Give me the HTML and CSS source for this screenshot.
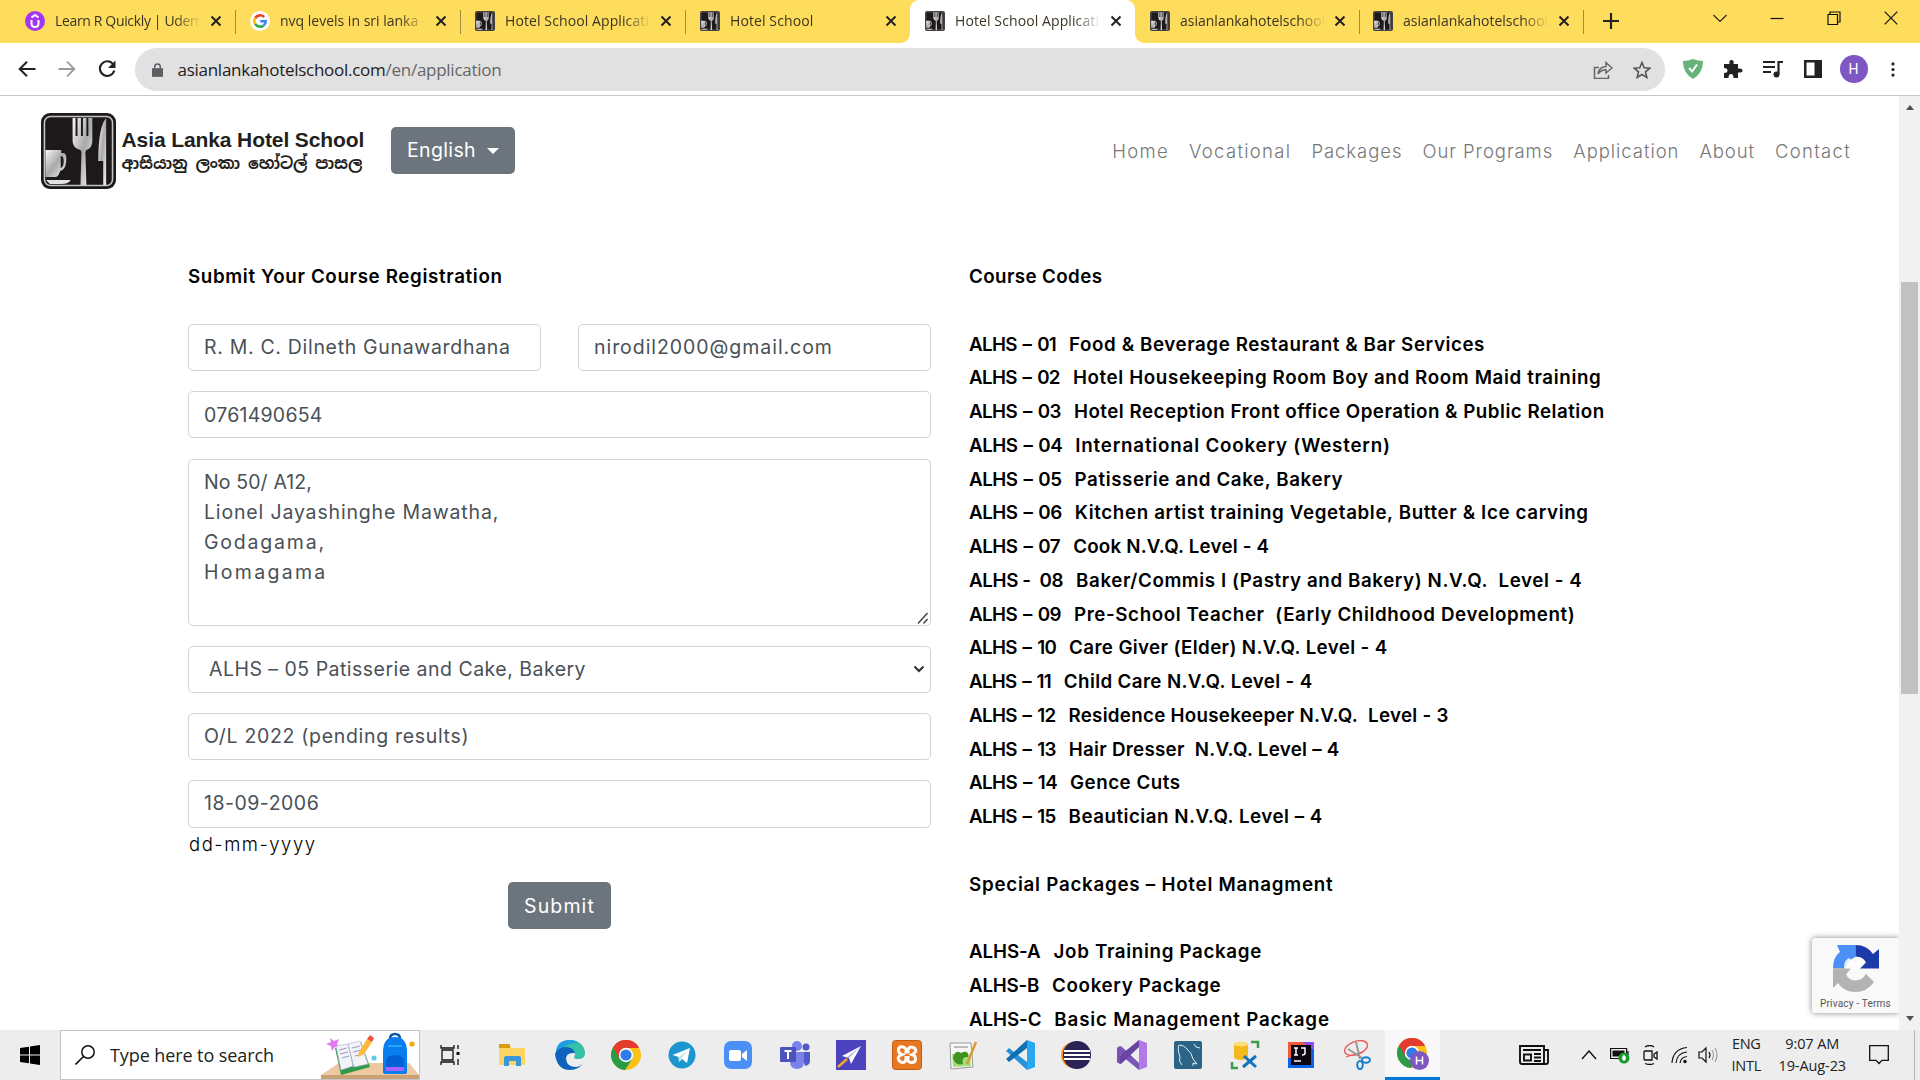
FILE: index.html
```html
<!DOCTYPE html>
<html lang="en">
<head>
<meta charset="utf-8">
<title>Hotel School Application</title>
<link rel="stylesheet" href="styles.css">
</head>
<body>
<svg class="defs" width="0" height="0">
  <defs>
    <linearGradient id="steel" x1="0" y1="0" x2="1" y2="1"><stop offset="0" stop-color="#f8f8f8"/><stop offset=".5" stop-color="#a9a9a9"/><stop offset="1" stop-color="#f4f4f4"/></linearGradient>
    <symbol id="cutlery" viewBox="0 0 76 76" preserveAspectRatio="none">
      <rect width="76" height="76" rx="9" fill="#1d191b"/>
      <rect x="3.5" y="3.500" width="69" height="69" rx="6" fill="none" stroke="#c4c4c4" stroke-width="1.600"/>
      <path d="M32 5h3v18h2V5h3.500v18h2V5H46v18h2V5h4v23q0 7-6 9l-1 2 1 33h-6l1-33-1-2q-8-2-8-9z" fill="url(#steel)"/>
      <path d="M66 5v67h-3V48h-5q0-34 8-43z" fill="url(#steel)"/>
      <path d="M4.500 37h16v3h2q4 0 3 9-1 8-6 9-1 4-4 6h-11zM20 43v12q3-1 3-7 0-5-3-5z" fill="url(#steel)" fill-rule="evenodd"/>
      <path d="M5 67h25q-2 4-9 4H9z" fill="#e2e2e2"/>
    </symbol>
    <symbol id="cross" viewBox="0 0 12 12"><path d="M1.500 1.500l9 9M10.500 1.500l-9 9" stroke="#222" stroke-width="2" fill="none"/></symbol>
    <symbol id="chrome" viewBox="0 0 30 30">
      <circle cx="15" cy="15" r="15" fill="#fbc116"/>
      <path d="M15 15L2 7.500A15 15 0 0 1 28 7.500H15z" fill="#e33b2e"/>
      <path d="M2 7.500A15 15 0 0 0 14 30l7.500-11.500L15 15z" fill="#2a9b47"/>
      <path d="M2 7.500L8.500 18.500 15 8H28A15 15 0 0 0 2 7.500z" fill="#e33b2e"/>
      <circle cx="15" cy="15" r="7.200" fill="#fff"/><circle cx="15" cy="15" r="5.600" fill="#2f7be8"/>
    </symbol>
  </defs>
</svg>

<div class="tabstrip">
  <div class="tab tab-first">
    <svg class="favicon" viewBox="0 0 20 20"><circle cx="10" cy="10" r="10" fill="#a435f0"/><path d="M6.500 9v3.500q0 3.500 3.500 3.500t3.500-3.500V9M6.500 6.500L10 4l3.500 2.500" fill="none" stroke="#fff" stroke-width="2"/></svg>
    <span class="tab-title">Learn R Quickly | Udemy</span><svg class="close"><use href="#cross"/></svg>
  </div>
  <div class="tab">
    <svg class="favicon" viewBox="0 0 20 20"><circle cx="10" cy="10" r="10" fill="#fff"/><g fill="none" stroke-width="2.600"><path d="M14.200 6A5.800 5.800 0 0 0 5.200 7" stroke="#ea4335"/><path d="M5.200 7a5.800 5.800 0 0 0 0 6" stroke="#fbbc05"/><path d="M5.200 13a5.800 5.800 0 0 0 8.500 1.400" stroke="#34a853"/><path d="M13.700 14.400q2-1.800 2-4.200H10.200" stroke="#4285f4"/></g></svg>
    <span class="tab-title">nvq levels in sri lanka - Google</span><svg class="close"><use href="#cross"/></svg>
  </div>
  <div class="tab">
    <svg class="favicon"><use href="#cutlery"/></svg>
    <span class="tab-title tab-wide">Hotel School Application</span><svg class="close"><use href="#cross"/></svg>
  </div>
  <div class="tab tab-plain">
    <svg class="favicon"><use href="#cutlery"/></svg>
    <span class="tab-title tab-wide">Hotel School</span><svg class="close"><use href="#cross"/></svg>
  </div>
  <div class="tab tab-active">
    <svg class="favicon"><use href="#cutlery"/></svg>
    <span class="tab-title tab-wide">Hotel School Application</span><svg class="close"><use href="#cross"/></svg>
  </div>
  <div class="tab tab-narrow">
    <svg class="favicon"><use href="#cutlery"/></svg>
    <span class="tab-title">asianlankahotelschool.com</span><svg class="close"><use href="#cross"/></svg>
  </div>
  <div class="tab tab-narrow">
    <svg class="favicon"><use href="#cutlery"/></svg>
    <span class="tab-title">asianlankahotelschool.com</span><svg class="close"><use href="#cross"/></svg>
  </div>
  <svg class="new-tab" viewBox="0 0 16 16"><path d="M8 0v16M0 8h16" stroke="#222" stroke-width="2.200"/></svg>
  <div class="window-controls">
    <svg viewBox="0 0 14 14"><path d="M.5 4L7 10.500 13.500 4" fill="none" stroke="#222" stroke-width="1.100"/></svg>
    <svg viewBox="0 0 14 14"><path d="M.5 7.500h13" stroke="#111" stroke-width="1.200"/></svg>
    <svg viewBox="0 0 14 14"><path d="M1 3.500h9.500V13.500H1zM3 3.500V1h10v10h-2.500" fill="none" stroke="#111" stroke-width="1.200"/></svg>
    <svg viewBox="0 0 14 14"><path d="M.7.700l12.600 12.600M13.300.700L.7 13.300" stroke="#111" stroke-width="1.200"/></svg>
  </div>
</div>

<div class="toolbar">
  <svg class="nav-icon" viewBox="0 0 18 18"><path d="M17.500 9H2M9 1.700L1.700 9 9 16.300" fill="none" stroke="#222" stroke-width="2"/></svg>
  <svg class="nav-icon" viewBox="0 0 18 18"><path d="M.5 9H16M9 1.700L16.300 9 9 16.300" fill="none" stroke="#9a9a9a" stroke-width="1.800"/></svg>
  <svg class="nav-icon" viewBox="0 0 18 18"><path d="M15.300 4.500A7.300 7.300 0 1 0 16.300 10.500" fill="none" stroke="#222" stroke-width="2.100"/><path d="M17.500.500v7.500H10z" fill="#222"/></svg>
  <div class="omnibox">
    <svg class="lock" viewBox="0 0 12 15"><path d="M0 5.500h12V15H0z" fill="#5b5e63"/><path d="M3 6V4a3 3 0 0 1 6 0v2" fill="none" stroke="#5b5e63" stroke-width="1.600"/></svg>
    <span class="url">asianlankahotelschool.com<span class="url-path">/en/application</span></span>
    <svg class="share" viewBox="0 0 20 18"><path d="M6 6.500H1.500v11h14V14" fill="none" stroke="#666" stroke-width="1.500"/><path d="M5 13q1-7 8-7.500V1.500l6 5.500-6 5V8.800Q8 8.800 5 13z" fill="none" stroke="#666" stroke-width="1.400"/></svg>
    <svg class="star" viewBox="0 0 18 18"><path d="M9 1.500l2.200 5.200 5.600.500-4.300 3.700 1.300 5.500L9 13.500l-4.800 2.900 1.300-5.500L1.200 7.200l5.600-.500z" fill="none" stroke="#555" stroke-width="1.600"/></svg>
  </div>
  <div class="extensions">
    <svg viewBox="0 0 20 20"><path d="M10 0q5 2 10 2 .3 12-10 18Q-.3 14 0 2q5 0 10-2z" fill="#67b279"/><path d="M6 9l3.200 3.500L14 5.500" fill="none" stroke="#fff" stroke-width="2"/></svg>
    <svg viewBox="0 0 20 20"><path d="M1 5h5.500q-.8-4 2-4t2 4H15v4.500q4.500-.6 4.500 2t-4.500 2V19h-4.500q0-4-2.500-4t-2.500 4H1v-5q3.500 0 3.500-2.500T1 9z" fill="#222"/></svg>
    <svg viewBox="0 0 20 20"><path d="M0 3h12M0 8h12M0 13h8M15.500 15V3H20" fill="none" stroke="#222" stroke-width="2.200"/><circle cx="13.500" cy="15.500" r="3" fill="#222"/></svg>
    <svg viewBox="0 0 20 20"><path d="M1 1h18v18H1zM3.500 3.500v13h8v-13z" fill="#222" fill-rule="evenodd"/></svg>
    <span class="avatar">H</span>
    <svg class="menu-dots" viewBox="0 0 20 20"><g fill="#222"><circle cx="10" cy="3" r="2"/><circle cx="10" cy="10" r="2"/><circle cx="10" cy="17" r="2"/></g></svg>
  </div>
</div>

<div class="viewport">
  <div class="page">
    <header class="site-header">
      <div class="brand">
        <svg class="brand-mark"><use href="#cutlery"/></svg>
        <div class="brand-text">
          <span class="brand-en">Asia Lanka Hotel School</span>
          <span class="brand-si" lang="si">ආසියානු ලංකා හෝටල් පාසල</span>
        </div>
      </div>
      <button class="btn language">English<i class="caret"></i></button>
      <nav class="site-nav">
        <a>Home</a><a>Vocational</a><a>Packages</a><a>Our Programs</a><a>Application</a><a>About</a><a>Contact</a>
      </nav>
    </header>
    <main class="content">
      <section class="registration">
        <h2 class="heading">Submit Your Course Registration</h2>
        <div class="form">
          <div class="form-row">
            <div class="field field-name">R. M. C. Dilneth Gunawardhana</div>
            <div class="field field-email">nirodil2000@gmail.com</div>
          </div>
          <div class="field field-phone">0761490654</div>
          <div class="field field-area">
            <span>No 50/ A12,</span>
            <span>Lionel Jayashinghe Mawatha,</span>
            <span>Godagama,</span>
            <span>Homagama</span>
            <svg class="resizer" viewBox="0 0 12 12"><path d="M1 11.500L10.500 1M6.500 11.500l4-4.500" stroke="#444" stroke-width="1.500"/></svg>
          </div>
          <div class="field field-select">ALHS – 05 Patisserie and Cake, Bakery
            <svg class="chevron" viewBox="0 0 12 8"><path d="M1.500 1.500L6 6l4.500-4.500" fill="none" stroke="#333" stroke-width="2.200"/></svg>
          </div>
          <div class="field">O/L 2022 (pending results)</div>
          <div class="field field-date">18-09-2006</div>
        </div>
        <p class="hint">dd-mm-yyyy</p>
        <button class="btn submit">Submit</button>
      </section>
      <section class="courses">
        <h2 class="heading heading-codes">Course Codes</h2>
        <ul class="course-list codes">
          <li><b>ALHS – 01</b><span>Food &amp; Beverage Restaurant &amp; Bar Services</span></li>
          <li><b>ALHS – 02</b><span>Hotel Housekeeping Room Boy and Room Maid training</span></li>
          <li><b>ALHS – 03</b><span>Hotel Reception Front office Operation &amp; Public Relation</span></li>
          <li><b>ALHS – 04</b><span>International Cookery (Western)</span></li>
          <li><b>ALHS – 05</b><span>Patisserie and Cake, Bakery</span></li>
          <li><b>ALHS – 06</b><span>Kitchen artist training Vegetable, Butter &amp; Ice carving</span></li>
          <li><b>ALHS – 07</b><span>Cook N.V.Q. Level - 4</span></li>
          <li><b>ALHS -&nbsp; 08</b><span>Baker/Commis I (Pastry and Bakery) N.V.Q.&nbsp; Level - 4</span></li>
          <li><b>ALHS – 09</b><span>Pre-School Teacher&nbsp; (Early Childhood Development)</span></li>
          <li><b>ALHS – 10</b><span>Care Giver (Elder) N.V.Q. Level - 4</span></li>
          <li><b>ALHS – 11</b><span>Child Care N.V.Q. Level - 4</span></li>
          <li><b>ALHS – 12</b><span>Residence Housekeeper N.V.Q.&nbsp; Level - 3</span></li>
          <li><b>ALHS – 13</b><span>Hair Dresser&nbsp; N.V.Q. Level – 4</span></li>
          <li><b>ALHS – 14</b><span>Gence Cuts</span></li>
          <li><b>ALHS – 15</b><span>Beautician N.V.Q. Level – 4</span></li>
        </ul>
        <h2 class="heading heading-packages">Special Packages – Hotel Managment</h2>
        <ul class="course-list packages">
          <li><b>ALHS-A</b><span>Job Training Package</span></li>
          <li><b>ALHS-B</b><span>Cookery Package</span></li>
          <li><b>ALHS-C</b><span>Basic Management Package</span></li>
        </ul>
      </section>
    </main>
    <aside class="recaptcha">
      <svg viewBox="0 0 46 47"><path d="M22.500 0v12Q16 14 12 23.500H0Q0 12 7 7L4 0z" fill="#4a90f5"/><path d="M22.500 0Q34 0 40 9l6-5v19.500H27l6-6q-3-6-10.500-6z" fill="#1c3aa9"/><path d="M0 23.500h18l-5 6q3 6 9.500 6T33 29l8 8q-7 10-18.500 10Q11 47 5 38l-5 5z" fill="#b3b3b3"/><path d="M11 23q0-8 5-10l7 6 3-7q7 3 6 6l-6 6z" fill="#fff" opacity=".85"/></svg>
      <span>Privacy - Terms</span>
    </aside>
  </div>
  <div class="scrollbar"><i class="up"></i><i class="thumb"></i><i class="down"></i></div>
</div>

<footer class="taskbar">
  <svg class="start" viewBox="0 0 20 20"><path d="M0 3l9-1.300v7.800H0zM10 1.500L20 0v9.500H10zM0 10.500h9v7.800L0 17zM10 10.500h10V20l-10-1.500z" fill="#000"/></svg>
  <div class="search">
    <svg class="magnifier" viewBox="0 0 20 20"><circle cx="13" cy="7" r="6.200" fill="none" stroke="#111" stroke-width="1.500"/><path d="M8.500 11.500L.500 19.500" stroke="#111" stroke-width="1.600"/></svg>
    <span>Type here to search</span>
    <svg class="doodle" viewBox="0 0 98 48"><path d="M18 32h70l10 12H0z" fill="#ecc9a0"/><path d="M0 44h98v4H0z" fill="#c9a177"/><path d="M9 7l4 3 5-2-2 5 3 4-5-1-3 4-1-5-5-2 5-2z" fill="#e478f5"/><path d="M14 17l26-6 9 25-29 8z" fill="#2f9a4a"/><path d="M15 15l12-2 5 22-12 4zM27 13l12-3 8 23-14 3z" fill="#f3f3fa" stroke="#b7b7d8" stroke-width=".7"/><path d="M18 19l8-2M19 23l8-2M21 27l7-2M31 17l8-2M32 21l8-2M34 25l8-2" stroke="#9898c0" stroke-width="1"/><path d="M38 21l8-13 5 3-8 12-6 3z" fill="#ffb83a"/><path d="M46 8l3-4 4 3-2 4z" fill="#f0533c"/><circle cx="53" cy="27" r="2.600" fill="#5ecbe0"/><circle cx="91" cy="13" r="2.600" fill="#f7a900"/><path d="M69 8q0-5 5-5t5 5" fill="none" stroke="#1257a8" stroke-width="2.500"/><path d="M62 21q0-15 12-15t12 15v20q0 2-3 2H65q-3 0-3-2z" fill="#087df0"/><path d="M65 31q0-7 9-7t9 7v8H65z" fill="#0461d3"/><path d="M65 36h18v4H65z" fill="#a763ff"/><path d="M67 15h14" stroke="#37b2ff" stroke-width="1.500"/></svg>
  </div>
  <div class="task-icons">
    <svg viewBox="0 0 30 30"><path d="M5 5v3h13V5M5 25v-3h13v3M6 10h11v10H6zM22 5v4M22 19v6" fill="none" stroke="#111" stroke-width="1.300"/><path d="M20.500 12h3v3h-3z" fill="#111"/></svg>
    <svg viewBox="0 0 30 30"><path d="M1 5h10l3 3h13v17H1z" fill="#ffd561"/><path d="M1 4h11v4H1z" fill="#dc9b0d"/><path d="M6 26V18q0-2 2-2h13q2 0 2 2v8h-5v-5h-7v5z" fill="#3a97dc"/></svg>
    <svg viewBox="0 0 30 30"><path d="M15 0C25 0 30 7 30 13q0 6-7 6-4 0-4-2l1-2q0-5-6-5Q4 10 1 18 0 0 15 0z" fill="#35c1a5"/><path d="M1 18Q-1 0 15 0q5 0 8 3Q8 2 1 18z" fill="#1d9ee2"/><path d="M0 14q3-7 11-7 7 0 9 6-9-1-9 6 1 8 10 8 4 0 7-4-4 7-13 7Q2 30 0 14z" fill="#0f62bd"/></svg>
    <svg viewBox="0 0 30 30"><use href="#chrome"/></svg>
    <svg viewBox="0 0 30 30"><circle cx="15" cy="15" r="13.500" fill="#1d96cf"/><path d="M5.500 15L23 8l-3 15-5-4-3 3-.5-5z" fill="#fff"/><path d="M12 17l8-6-6 8-2 3z" fill="#c5dcea"/></svg>
    <svg viewBox="0 0 30 30"><rect x="1" y="1" width="28" height="28" rx="7" fill="#4a8ff8"/><rect x="6" y="10" width="12" height="11" rx="2" fill="#fff"/><path d="M19 14l5-4v11l-5-4z" fill="#fff"/></svg>
    <svg viewBox="0 0 30 30"><circle cx="17" cy="6" r="5" fill="#7b83eb"/><circle cx="26" cy="7" r="3.500" fill="#5059c9"/><path d="M21 12h9v9q0 4-5 5z" fill="#5059c9"/><path d="M10 12h14v10q0 7-7 7t-7-7z" fill="#7b83eb"/><rect y="7" width="16" height="15" rx="1" fill="#4b53bc"/><path d="M4.500 11h7M8 11v8" stroke="#fff" stroke-width="2"/></svg>
    <svg viewBox="0 0 30 30"><path d="M0 0h30v30H0z" fill="#4a43bd"/><path d="M25 6L6 16l7 2 2 6z" fill="#fff"/><path d="M25 6L13 18l-2-1z" fill="#b7b5dd"/><path d="M11 19l-9 8" stroke="#f2a52c" stroke-width="2.500"/></svg>
    <svg viewBox="0 0 30 30"><rect x=".5" y=".5" width="29" height="29" rx="3" fill="#e87722" stroke="#c45d12"/><path d="M10 14.500Q6 13 6.500 9.500T11 7t3 5h2q0-5 3-5t4.500 2.500-3.500 5q4 1.500 3.500 5T19 22.500t-3-5h-2q0 5-3 5t-4.500-3 3.500-5z" fill="none" stroke="#fff" stroke-width="3"/></svg>
    <svg viewBox="0 0 30 30"><path d="M2 3h21l2 24-22 2z" fill="#f6f6f6" stroke="#999"/><path d="M4 14h18l1 12-18 1z" fill="#a4dd7e"/><path d="M5 18q2-9 8-5 8-4 7 4-7-1-5 7-8 2-10-6z" fill="#3f9420"/><path d="M6 7h14" stroke="#aaa" stroke-width="1.500"/><path d="M28 2l-9 22" stroke="#db9b36" stroke-width="2.500"/></svg>
    <svg viewBox="0 0 30 30"><path d="M22 22L4 8l-3 3 21 19z" fill="#2792dc"/><path d="M22 8L4 22l-3-3L22 0z" fill="#1070b3"/><path d="M22 0l8 3v24l-8 3z" fill="#29a8f2"/></svg>
    <svg viewBox="0 0 30 30"><circle cx="13" cy="15" r="13" fill="#f7941e"/><circle cx="16" cy="15" r="14" fill="#2c2255"/><path d="M3 11h26M3 15h26M3 19h26" stroke="#fff" stroke-width="1.800"/></svg>
    <svg viewBox="0 0 30 30"><path d="M0 8l4-2 18 17V30L0 12z" fill="#7c55b9"/><path d="M0 22l4 2L22 7V0L0 18z" fill="#68439f"/><path d="M22 0l8 3v24l-8 3z" fill="#b179e6"/><path d="M0 8v14l3 2V6z" fill="#7951b5"/></svg>
    <svg viewBox="0 0 30 30"><rect x="1" y="1" width="28" height="28" rx="2" fill="#2b6486"/><path d="M9 25q-4-4-2-8Q4 8 6 5q5 0 8 4 5 4 6 10l4 5-4-1v3M21 4l2 3 4 1" fill="none" stroke="#e0eef5" stroke-width="1"/></svg>
    <svg viewBox="0 0 30 30"><path d="M4 4v14q7 4 14 0V4z" fill="#f3b91d"/><ellipse cx="11" cy="4" rx="7" ry="2.500" fill="#ffdf7b"/><path d="M21 2h7v6M8 28H2v-6" fill="none" stroke="#3d9d4e" stroke-width="2.500"/><path d="M13 27l13-11M14 16l12 11" stroke="#1674bd" stroke-width="3"/></svg>
    <svg viewBox="0 0 30 30"><path d="M2 2h26v26H2z" fill="#0c62e8"/><path d="M2 2h20l-9 16H2z" fill="#f05a38"/><path d="M16 2h12v8z" fill="#8b4df5"/><path d="M5 5h20v20H5z" fill="#0d0711"/><path d="M8 8h4M10 8v7M8 15h4M15 8h4v5q0 2-3 2M8 21h7" fill="none" stroke="#fff" stroke-width="1.500"/></svg>
    <svg viewBox="0 0 30 30"><ellipse cx="14" cy="8" rx="12" ry="6.500" transform="rotate(-20 14 8)" fill="none" stroke="#ee5a58" stroke-width="1.400"/><path d="M4 17l16-5" stroke="#ee5a58" stroke-width="1.200"/><path d="M14 2l4 17M6 9l14 9" stroke="#999" stroke-width="2"/><ellipse cx="18" cy="25" rx="2.800" ry="4" fill="none" stroke="#157fd0" stroke-width="2"/><ellipse cx="24" cy="20" rx="4" ry="2.800" fill="none" stroke="#157fd0" stroke-width="2"/></svg>
    <div class="running"><svg viewBox="0 0 32 32"><use href="#chrome" width="30" height="30"/><circle cx="22.500" cy="22.500" r="9.500" fill="#7e57c2"/><path d="M19.500 18.500v8M25.500 18.500v8M19.500 22.500h6" stroke="#fff" stroke-width="1.500"/></svg></div>
  </div>
  <div class="tray">
    <svg class="news" viewBox="0 0 30 20"><path d="M1 1h24v18H3q-2 0-2-2zM25 5h4v12q0 2-2 2h-3M4 5h18M15 9h7M15 12.500h7M15 16h7M5 9.500h7v6H5z" fill="none" stroke="#111" stroke-width="1.900"/></svg>
    <svg class="t-up" viewBox="0 0 16 10"><path d="M1 9l7-8 7 8" fill="none" stroke="#111" stroke-width="1.400"/></svg>
    <svg class="t-bat" viewBox="0 0 20 18"><path d="M.6 2.500h16v10H.6zM18 5v5" fill="none" stroke="#111" stroke-width="1.200"/><path d="M2.500 4.500h12v6h-12z" fill="#111"/><circle cx="14" cy="12" r="5.500" fill="#159b2b"/><path d="M14 8.500q4 4 0 6.500-4-2.500 0-6.500z" fill="#fff"/></svg>
    <svg class="t-cam" viewBox="0 0 16 20"><path d="M2 6h7v9H2q-1 0-1-1V7q0-1 1-1zM11 9l3-2v7l-3-2zM2 2q5-3 9 0M2 18.500q5 2 9 0" fill="none" stroke="#111" stroke-width="1.300"/></svg>
    <svg class="t-wifi" viewBox="0 0 18 18"><path d="M1 17Q2 3 16 1.500M5 17q1-10 11-11M9 17q1-6 7-6.500" fill="none" stroke="#111" stroke-width="1.200"/><circle cx="14" cy="15.500" r="1.700" fill="#111"/></svg>
    <svg class="t-vol" viewBox="0 0 20 18"><path d="M1 6h3l4-4v14l-4-4H1zM11 6q2 3 0 6" fill="none" stroke="#111" stroke-width="1.200"/><path d="M14 4q3 5 0 10M17 2q4 7 0 14" fill="none" stroke="#999" stroke-width="1.100"/></svg>
    <div class="stack lang"><span>ENG</span><span>INTL</span></div>
    <div class="stack clock"><span>9:07 AM</span><span>19-Aug-23</span></div>
    <svg class="t-note" viewBox="0 0 20 20"><path d="M.7.700h18.600v14.600H13L10 18.500 7 15.300H.7z" fill="none" stroke="#111" stroke-width="1.300"/></svg>
  </div>
</footer>
</body>
</html>
```
FILE: styles.css
```css
* { box-sizing: border-box; }
body { margin: 0; width: 1920px; height: 1080px; overflow: hidden; display: flex; flex-direction: column; background: #fff; font-family: Inter, "Liberation Sans", sans-serif; color: #000; }
svg { display: block; flex: none; }
.defs { position: absolute; }

/* Browser tabs */
.tabstrip { height: 43px; flex: none; display: flex; align-items: flex-start; background: #ffdd5c; font: 14px/20px "Open Sans", sans-serif; color: #3a3523; }
.tab { width: 225px; height: 43px; padding: 11px 13px 12px 15px; display: flex; align-items: flex-start; position: relative; flex: none; }
.tab-first { width: 235px; padding-left: 25px; letter-spacing: -.35px; }
.tab-narrow { width: 224px; padding-left: 14px; }
.tab-active + .tab-narrow { padding-left: 15px; }
.tab::after { content: ""; position: absolute; right: -1px; top: 10px; width: 1.500px; height: 24px; background: #a18b3c; }
.tab-plain::after, .tab-active::after { display: none; }
.favicon { width: 20px; height: 20px; }
.tab-title { flex: 1; min-width: 0; margin: 0 9px 0 10px; overflow: hidden; white-space: nowrap; -webkit-mask-image: linear-gradient(90deg, #000 82%, transparent); mask-image: linear-gradient(90deg, #000 82%, transparent); }
.tab-wide { letter-spacing: .1px; }
.close { width: 12px; height: 12px; margin-top: 4px; }
.tab-active { background: #fff; border-radius: 9px 9px 0 0; }
.tab-active::before { content: ""; position: absolute; left: -9px; right: -9px; bottom: 0; height: 9px; background: radial-gradient(circle at 0 0, transparent 8.500px, #fff 9px) left / 9px 9px no-repeat, radial-gradient(circle at 100% 0, transparent 8.500px, #fff 9px) right / 9px 9px no-repeat; }
.new-tab { width: 16px; height: 16px; margin: 13px 0 0 20px; }
.window-controls { display: flex; gap: 43px; margin: 11px 22px 0 auto; }
.window-controls svg { width: 14px; height: 14px; }

/* Address bar */
.toolbar { height: 53px; flex: none; display: flex; align-items: center; border-bottom: 1px solid #c8c8c8; padding: 0 18px; }
.nav-icon { width: 18px; height: 18px; margin-right: 22px; }
.omnibox { width: 1530px; height: 43px; border-radius: 22px; background: #e1e1e1; margin-left: -3px; padding: 1px 14px 0 17px; display: flex; align-items: center; font: 17px/24px "Open Sans", sans-serif; color: #222; }
.lock { width: 11px; height: 14px; }
.url { margin-left: 14.500px; flex: 1; white-space: nowrap; letter-spacing: -.27px; }
.url-path { color: #666; }
.share { width: 20px; height: 18px; margin-right: 20px; }
.star { width: 18px; height: 18px; }
.extensions { display: flex; align-items: center; gap: 20px; margin-left: 17.500px; }
.extensions svg { width: 20px; height: 20px; }
.avatar { width: 28px; height: 28px; margin: 0 -3px; border-radius: 50%; background: #7e57c2; color: #fff; font: 14px/28px Roboto, sans-serif; text-align: center; }
.extensions .menu-dots { width: 16px; height: 17px; }

.viewport { flex: 1; min-height: 0; display: flex; }
.page { flex: 1; min-width: 0; overflow: hidden; position: relative; }
.scrollbar { width: 21px; background: #f1f1f1; display: flex; flex-direction: column; align-items: center; padding: 9px 0; }
.up, .down { width: 0; height: 0; border: 4.500px solid transparent; }
.up { border-top: 0; border-bottom: 5px solid #505050; }
.down { border-bottom: 0; border-top: 5px solid #505050; margin-top: auto; }
.thumb { width: 17px; height: 412px; margin-top: 172px; background: #c1c1c1; }

/* Site header */
.site-header { height: 109px; display: flex; align-items: center; padding: 0 48px 0 41px; }
.brand { display: flex; align-items: center; width: 350px; }
.brand-mark { width: 75px; height: 76px; }
.brand-text { margin-left: 5.500px; white-space: nowrap; color: #231f20; }
.brand-text > span { display: block; }
.brand-en { font: bold 21px/26px "Liberation Sans", sans-serif; letter-spacing: -.1px; }
.brand-si { font: bold 16px/22px "Noto Sans Sinhala", "Noto Sans", sans-serif; letter-spacing: -.1px; }
.btn { border: 0; border-radius: 5px; background: #6c757d; color: #fff; height: 47px; font: 19.500px/47px Inter, sans-serif; padding: 0; }
.language { width: 124px; display: flex; align-items: center; padding-left: 16px; letter-spacing: .36px; }
.caret { border: 6px solid transparent; border-top-color: #fff; border-bottom: 0; margin-left: 11px; }
.site-nav { margin-left: auto; display: flex; gap: 20px; font-size: 18.500px; font-weight: 300; color: #777; letter-spacing: .95px; }
.site-nav a:nth-child(1), .site-nav a:nth-child(2), .site-nav a:last-child { letter-spacing: 1.300px; }
.site-nav a:nth-child(6) { letter-spacing: .9px; }

/* Registration form */
.content { display: flex; padding: 55px 0 0 188px; }
.registration { width: 743px; margin-right: 38px; }
.heading { margin: 0; height: 33.750px; font-size: 18.750px; line-height: 33.750px; font-weight: 600; white-space: nowrap; letter-spacing: .65px; }
.heading-codes { letter-spacing: .4px; }
.heading-packages { letter-spacing: .75px; }
.form { margin-top: 30px; display: flex; flex-direction: column; gap: 20.200px; }
.form-row { display: flex; gap: 37px; }
.field { flex: 1 0 auto; height: 47.200px; border: 1px solid #ced4da; border-radius: 5px; padding: 0 15px; font-size: 19.500px; line-height: 45px; color: #495057; white-space: nowrap; letter-spacing: .68px; }
.form-row .field { flex: 1 0 0; }
.form-row .field-email { letter-spacing: .95px; }
.field-phone { letter-spacing: .25px; padding-top: 1px; }
.field-date { letter-spacing: .5px; }
.field-area { height: 167px; line-height: 30px; padding-top: 7px; position: relative; }
.field-area span { display: block; letter-spacing: .12px; }
.field-area span:nth-child(2) { letter-spacing: .84px; }
.field-area span:nth-child(3) { letter-spacing: 1.800px; }
.field-area span:nth-child(4) { letter-spacing: 2.300px; }
.resizer { position: absolute; right: 1px; bottom: 1px; width: 12px; height: 12px; }
.field-select { display: flex; align-items: center; justify-content: space-between; padding: 0 5px 0 20px; letter-spacing: .48px; }
.chevron { width: 12px; height: 8px; }
.hint { margin: 0; padding-left: 1px; font-size: 18.500px; line-height: 33px; font-weight: 300; letter-spacing: 1.500px; }
.submit { display: block; width: 103px; margin: 21px auto 0; padding-top: 1px; text-align: center; letter-spacing: 1.140px; }

.course-list { list-style: none; margin: 33.750px 0; padding: 0; font-size: 18.750px; line-height: 33.750px; font-weight: 600; white-space: nowrap; }
.course-list li { display: flex; gap: 13px; height: 33.750px; }
.course-list b { font-weight: 600; letter-spacing: -.5px; word-spacing: 1.800px; }
.course-list span { letter-spacing: .6px; }
.codes li:nth-child(1) b, .codes li:nth-child(2) b, .codes li:nth-child(n+10) b { letter-spacing: -.67px; }
.codes li:nth-child(11) b { letter-spacing: -.76px; }
.codes li:nth-child(8) b { letter-spacing: -.36px; word-spacing: 0; }
.codes li:nth-child(3) b, .codes li:nth-child(9) b, .codes li:nth-child(14) b { letter-spacing: -.58px; }
.codes li:nth-child(1) span, .codes li:nth-child(8) span { letter-spacing: .58px; }
.codes li:nth-child(2) span, .codes li:nth-child(6) span { letter-spacing: .63px; }
.codes li:nth-child(3) span { letter-spacing: .5px; }
.codes li:nth-child(4) span { letter-spacing: .81px; }
.codes li:nth-child(7) span { letter-spacing: .2px; }
.codes li:nth-child(10) span, .codes li:nth-child(11) span { letter-spacing: .37px; }
.codes li:nth-child(12) span, .codes li:nth-child(13) span { letter-spacing: .28px; }
.codes li:nth-child(14) span, .codes li:nth-child(15) span { letter-spacing: .5px; }
.packages li b { letter-spacing: -.1px; }
.packages li:nth-child(2) b { letter-spacing: -.25px; }
.packages li span { letter-spacing: .66px; }
.packages li:nth-child(3) span { letter-spacing: .82px; }

.recaptcha { position: absolute; right: 0; bottom: 17px; width: 87px; height: 75px; border-radius: 3px 0 0 3px; background: #f9f9f9; box-shadow: 0 0 6px #888; display: flex; flex-direction: column; align-items: center; padding-top: 7px; font: 10px/14px Roboto, sans-serif; letter-spacing: .2px; color: #555; }
.recaptcha svg { width: 46px; height: 47px; margin-bottom: 5px; }

/* Taskbar */
.taskbar { height: 50px; flex: none; background: #ededed; display: flex; align-items: center; font-family: "Open Sans", sans-serif; }
.start { width: 20px; height: 20px; margin: 0 20px; }
.search { width: 360px; height: 50px; background: #fff; border: 1px solid #c4c4c4; display: flex; align-items: center; padding-left: 14px; font-size: 18px; color: #222; white-space: nowrap; letter-spacing: -.09px; }
.magnifier { width: 20px; height: 20px; margin-right: 15px; }
.doodle { width: 98px; height: 48px; margin-left: auto; }
.task-icons { display: flex; height: 50px; align-items: center; margin-left: 16px; gap: 26.250px; }
.task-icons > svg { width: 30px; height: 30px; }
.task-icons > svg:first-child { margin-right: 6px; }
.running { width: 55px; height: 50px; margin-left: -13px; background: #f8f8f8; border-bottom: 3px solid #0078d7; display: flex; align-items: center; justify-content: center; }
.running svg { width: 32px; height: 32px; }
.tray { flex: 1; display: flex; align-items: center; height: 50px; margin-right: 5px; border-right: 1px solid #b5b5b5; padding-right: 25px; padding-left: 79px; }
.news { width: 30px; height: 20px; margin-right: 32px; }
.t-up { width: 16px; height: 10px; margin-right: 13px; }
.t-bat { width: 20px; height: 18px; margin-right: 13px; }
.t-cam { width: 16px; height: 20px; margin-right: 12px; }
.t-wifi { width: 18px; height: 18px; margin-right: 9px; }
.t-vol { width: 20px; height: 18px; }
.stack { display: flex; flex-direction: column; align-items: center; font-size: 14.500px; line-height: 22.500px; color: #222; white-space: nowrap; }
.lang { width: 32px; margin-left: 12px; letter-spacing: -.3px; }
.clock { width: 74px; margin-left: 13px; letter-spacing: -.1px; }
.t-note { width: 20px; height: 20px; margin-left: auto; }
```
